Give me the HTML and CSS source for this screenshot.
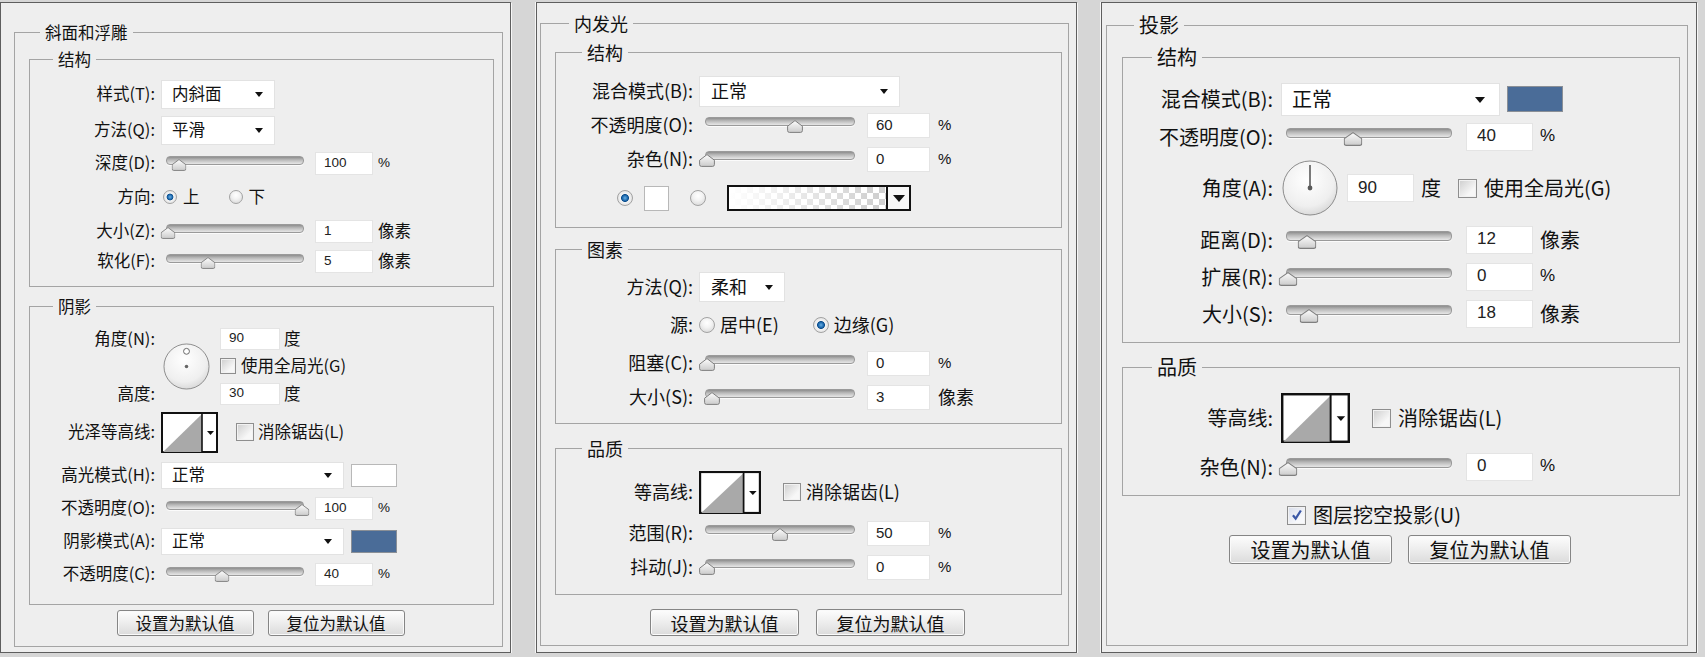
FILE: index.html
```html
<!DOCTYPE html>
<html lang="zh-CN">
<head>
  <meta charset="UTF-8">
  <title>图层样式</title>
  <link rel="stylesheet" href="styles.css">
</head>
<body>
  <svg class="defs" aria-hidden="true">
    <defs>
      <linearGradient id="thumbFill" x1="0" y1="0" x2="0" y2="1">
        <stop offset="0" stop-color="#fdfdfd"/>
        <stop offset="1" stop-color="#cbcbcb"/>
      </linearGradient>
      <radialGradient id="dialFill" cx=".45" cy=".35" r=".7">
        <stop offset="0" stop-color="#ffffff"/>
        <stop offset=".7" stop-color="#efefef"/>
        <stop offset="1" stop-color="#d4d4d4"/>
      </radialGradient>
      <symbol id="thumb" viewBox="0 0 16 13" preserveAspectRatio="none">
        <path d="M8 .6 15.4 6.2V10.6Q15.4 12.4 13.6 12.4H2.4Q.6 12.4 .6 10.6V6.2Z" fill="url(#thumbFill)" stroke="#7f7f7f" stroke-width="1"/>
      </symbol>
      <symbol id="contour" viewBox="0 0 57 41" preserveAspectRatio="none">
        <rect x="1" y="1" width="55" height="39" fill="#fff" stroke="#111" stroke-width="2"/>
        <path d="M2 40 41 2V40Z" fill="#a9a9a9"/>
        <path d="M41 1V40" stroke="#111" stroke-width="1.6"/>
        <path d="M46 19h7l-3.5 4z" fill="#111"/>
      </symbol>
      <symbol id="tick" viewBox="0 0 12 12">
        <path d="M2.6 6.4 5 9.4 9.6 2.2" fill="none" stroke="#3b58a6" stroke-width="2"/>
      </symbol>
    </defs>
  </svg>

  <!-- 斜面和浮雕 -->
  <div class="win p1">
    <fieldset class="grp outer">
      <legend>斜面和浮雕</legend>
      <fieldset class="grp sub bevel-struct">
        <legend>结构</legend>
        <div class="row sel"><span class="lbl">样式(T):</span><div class="select">内斜面</div></div>
        <div class="row sel"><span class="lbl">方法(Q):</span><div class="select">平滑</div></div>
        <div class="row">
          <span class="lbl">深度(D):</span>
          <div class="slider"><svg class="thumb" style="--v:.08"><use href="#thumb"/></svg></div>
          <span class="num">100</span><span class="pct">%</span>
        </div>
        <div class="row rad">
          <span class="lbl">方向:</span>
          <span class="radio on"></span><span class="opt">上</span>
          <span class="radio"></span><span class="opt">下</span>
        </div>
        <div class="row">
          <span class="lbl">大小(Z):</span>
          <div class="slider"><svg class="thumb" style="--v:0"><use href="#thumb"/></svg></div>
          <span class="num">1</span><span class="unit">像素</span>
        </div>
        <div class="row">
          <span class="lbl">软化(F):</span>
          <div class="slider"><svg class="thumb" style="--v:.3"><use href="#thumb"/></svg></div>
          <span class="num">5</span><span class="unit">像素</span>
        </div>
      </fieldset>

      <fieldset class="grp sub bevel-shade">
        <legend>阴影</legend>
        <div class="angle">
          <span class="lbl">角度(N):</span>
          <svg class="dial" viewBox="0 0 48 48">
            <circle cx="24" cy="24" r="23" fill="url(#dialFill)" stroke="#8c8c8c"/>
            <circle cx="24" cy="8.5" r="3" fill="#fff" stroke="#666"/>
            <circle cx="24" cy="24" r="1.8" fill="#666"/>
          </svg>
          <div class="aval"><span class="num">90</span><span class="unit">度</span></div>
          <label class="check"><span class="box"></span>使用全局光(G)</label>
          <span class="lbl">高度:</span>
          <div class="aval"><span class="num">30</span><span class="unit">度</span></div>
        </div>
        <div class="row ctr">
          <span class="lbl">光泽等高线:</span>
          <svg class="contour"><use href="#contour"/></svg>
          <label class="check"><span class="box"></span>消除锯齿(L)</label>
        </div>
        <div class="row sel">
          <span class="lbl">高光模式(H):</span>
          <div class="select wide">正常</div>
          <span class="swatch white"></span>
        </div>
        <div class="row">
          <span class="lbl">不透明度(O):</span>
          <div class="slider"><svg class="thumb" style="--v:1"><use href="#thumb"/></svg></div>
          <span class="num">100</span><span class="pct">%</span>
        </div>
        <div class="row sel">
          <span class="lbl">阴影模式(A):</span>
          <div class="select wide">正常</div>
          <span class="swatch blue"></span>
        </div>
        <div class="row">
          <span class="lbl">不透明度(C):</span>
          <div class="slider"><svg class="thumb" style="--v:.4"><use href="#thumb"/></svg></div>
          <span class="num">40</span><span class="pct">%</span>
        </div>
      </fieldset>

      <div class="btns"><button class="btn">设置为默认值</button><button class="btn">复位为默认值</button></div>
    </fieldset>
  </div>

  <!-- 内发光 -->
  <div class="win p2">
    <fieldset class="grp outer">
      <legend>内发光</legend>
      <fieldset class="grp sub glow-struct">
        <legend>结构</legend>
        <div class="row sel"><span class="lbl">混合模式(B):</span><div class="select">正常</div></div>
        <div class="row">
          <span class="lbl">不透明度(O):</span>
          <div class="slider"><svg class="thumb" style="--v:.6"><use href="#thumb"/></svg></div>
          <span class="num">60</span><span class="pct">%</span>
        </div>
        <div class="row">
          <span class="lbl">杂色(N):</span>
          <div class="slider"><svg class="thumb" style="--v:0"><use href="#thumb"/></svg></div>
          <span class="num">0</span><span class="pct">%</span>
        </div>
        <div class="row sw">
          <span class="radio on"></span>
          <span class="swatch white"></span>
          <span class="radio"></span>
          <div class="grad"><span class="grad-fill"></span><span class="grad-arrow"></span></div>
        </div>
      </fieldset>

      <fieldset class="grp sub glow-elem">
        <legend>图素</legend>
        <div class="row sel"><span class="lbl">方法(Q):</span><div class="select short">柔和</div></div>
        <div class="row rad">
          <span class="lbl">源:</span>
          <span class="radio"></span><span class="opt">居中(E)</span>
          <span class="radio on"></span><span class="opt">边缘(G)</span>
        </div>
        <div class="row">
          <span class="lbl">阻塞(C):</span>
          <div class="slider"><svg class="thumb" style="--v:0"><use href="#thumb"/></svg></div>
          <span class="num">0</span><span class="pct">%</span>
        </div>
        <div class="row">
          <span class="lbl">大小(S):</span>
          <div class="slider"><svg class="thumb" style="--v:.035"><use href="#thumb"/></svg></div>
          <span class="num">3</span><span class="unit">像素</span>
        </div>
      </fieldset>

      <fieldset class="grp sub glow-qual">
        <legend>品质</legend>
        <div class="row ctr">
          <span class="lbl">等高线:</span>
          <svg class="contour"><use href="#contour"/></svg>
          <label class="check"><span class="box"></span>消除锯齿(L)</label>
        </div>
        <div class="row">
          <span class="lbl">范围(R):</span>
          <div class="slider"><svg class="thumb" style="--v:.5"><use href="#thumb"/></svg></div>
          <span class="num">50</span><span class="pct">%</span>
        </div>
        <div class="row">
          <span class="lbl">抖动(J):</span>
          <div class="slider"><svg class="thumb" style="--v:0"><use href="#thumb"/></svg></div>
          <span class="num">0</span><span class="pct">%</span>
        </div>
      </fieldset>

      <div class="btns"><button class="btn">设置为默认值</button><button class="btn">复位为默认值</button></div>
    </fieldset>
  </div>

  <!-- 投影 -->
  <div class="win p3">
    <fieldset class="grp outer">
      <legend>投影</legend>
      <fieldset class="grp sub drop-struct">
        <legend>结构</legend>
        <div class="row sel">
          <span class="lbl">混合模式(B):</span>
          <div class="select">正常</div>
          <span class="swatch blue"></span>
        </div>
        <div class="row">
          <span class="lbl">不透明度(O):</span>
          <div class="slider"><svg class="thumb" style="--v:.4"><use href="#thumb"/></svg></div>
          <span class="num">40</span><span class="pct">%</span>
        </div>
        <div class="row dial-row">
          <span class="lbl">角度(A):</span>
          <svg class="dial" viewBox="0 0 56 56">
            <circle cx="28" cy="28" r="27" fill="url(#dialFill)" stroke="#8c8c8c"/>
            <path d="M28 28V5" stroke="#5a5a5a" stroke-width="1.6"/>
            <circle cx="28" cy="28" r="2.4" fill="#5a5a5a"/>
          </svg>
          <span class="num">90</span><span class="unit">度</span>
          <label class="check"><span class="box"></span>使用全局光(G)</label>
        </div>
        <div class="row">
          <span class="lbl">距离(D):</span>
          <div class="slider"><svg class="thumb" style="--v:.12"><use href="#thumb"/></svg></div>
          <span class="num">12</span><span class="unit">像素</span>
        </div>
        <div class="row">
          <span class="lbl">扩展(R):</span>
          <div class="slider"><svg class="thumb" style="--v:0"><use href="#thumb"/></svg></div>
          <span class="num">0</span><span class="pct">%</span>
        </div>
        <div class="row">
          <span class="lbl">大小(S):</span>
          <div class="slider"><svg class="thumb" style="--v:.13"><use href="#thumb"/></svg></div>
          <span class="num">18</span><span class="unit">像素</span>
        </div>
      </fieldset>

      <fieldset class="grp sub drop-qual">
        <legend>品质</legend>
        <div class="row ctr">
          <span class="lbl">等高线:</span>
          <svg class="contour"><use href="#contour"/></svg>
          <label class="check"><span class="box"></span>消除锯齿(L)</label>
        </div>
        <div class="row">
          <span class="lbl">杂色(N):</span>
          <div class="slider"><svg class="thumb" style="--v:0"><use href="#thumb"/></svg></div>
          <span class="num">0</span><span class="pct">%</span>
        </div>
      </fieldset>

      <div class="knock">
        <label class="check"><span class="box on"><svg><use href="#tick"/></svg></span>图层挖空投影(U)</label>
      </div>
      <div class="btns"><button class="btn">设置为默认值</button><button class="btn">复位为默认值</button></div>
    </fieldset>
  </div>
</body>
</html>
```

FILE: styles.css
```css
* {
  box-sizing: border-box;
}

body {
  margin: 0;
  padding-top: 2px;
  display: flex;
  align-items: flex-start;
  background: #d6d6d6;
  font-family: "Noto Sans CJK SC", "Noto Sans", sans-serif;
  color: #111;
  line-height: 1.2;
}

.defs {
  width: 0;
  height: 0;
  flex: none;
}

/* dialog windows */
.win {
  flex: none;
  height: 651px;
  background: #eeeeee;
  border: 1px solid #5e5e5e;
  box-shadow: 1px 1px 0 #f6f6f6, -1px 0 0 #f6f6f6;
}

.p1 {
  width: 511px;
  padding: 19px 0 0 13px;
  font-size: 16.5px;
  --lw: 125px;
  --lg: 6px;
  --sel: 36px;
  --sl: 30px;
}

.p2 {
  width: 541px;
  margin-left: 25px;
  padding: 10px 0 0 3px;
  font-size: 18px;
  --lw: 137px;
  --lg: 6px;
  --sel: 34px;
  --sl: 34px;
}

.p3 {
  width: 596px;
  margin-left: 24px;
  padding: 11px 0 0 4px;
  font-size: 20px;
  --lw: 150px;
  --lg: 8px;
  --sel: 38px;
  --sl: 37px;
}

/* group boxes */
fieldset.grp {
  margin: 0;
  padding: 0;
  min-width: 0;
  border: 1px solid #a4a4a4;
}

.grp legend {
  padding: 0 5px;
  line-height: 20px;
}

.p3 .grp legend {
  line-height: 22px;
}

.p1 .outer { width: 489px; height: 625px; }
.p1 .outer > legend { margin-left: 25px; }
.p1 .sub { width: 465px; margin-left: 14px; }
.p1 .sub > legend { margin-left: 23px; }

.p2 .outer { width: 529px; height: 633px; }
.p2 .outer > legend { margin-left: 28px; }
.p2 .sub { width: 507px; margin-left: 14px; }
.p2 .sub > legend { margin-left: 26px; }

.p3 .outer { width: 582px; height: 632px; }
.p3 .outer > legend { margin-left: 27px; }
.p3 .sub { width: 558px; margin-left: 15px; }
.p3 .sub > legend { margin-left: 29px; }

.bevel-struct { margin-top: 7px !important; padding: 7px 0 10px !important; }
.bevel-shade { margin-top: 9px !important; padding: 9px 0 15px !important; }
.glow-struct { margin-top: 9px !important; padding: 12px 0 7px !important; }
.glow-elem { margin-top: 11px !important; padding: 11px 0 9px !important; }
.glow-qual { margin-top: 14px !important; padding: 10px 0 10px !important; }
.drop-struct { margin-top: 10px !important; padding: 12px 0 10px !important; }
.drop-qual { margin-top: 13px !important; padding: 10px 0 10px !important; }

/* rows */
.row {
  display: flex;
  align-items: center;
  height: var(--sl);
  white-space: nowrap;
}

.row.sel { height: var(--sel); }
.p1 .row.rad { height: 38px; }
.p1 .row.ctr { height: 50px; }
.p2 .row.sw { height: 44px; }
.p2 .row.rad { height: 42px; }
.p2 .row.ctr { height: 48px; }
.p3 .row.dial-row { height: 66px; }
.p3 .row.ctr { height: 60px; }

.lbl {
  flex: none;
  width: var(--lw);
  margin-right: var(--lg);
  text-align: right;
}

/* dropdowns */
.select {
  position: relative;
  flex: none;
  display: flex;
  align-items: center;
  background: #fff;
  border: 1px solid #e2e2e2;
  padding-left: 10px;
}

.select::after {
  content: "";
  position: absolute;
  right: 11px;
  top: 50%;
  margin-top: -2px;
  border: 4.5px solid transparent;
  border-top: 5px solid #111;
  border-bottom: 0;
}

.p1 .select { width: 114px; height: 29px; }
.p1 .select.wide { width: 183px; height: 27px; }
.p2 .select { width: 201px; height: 31px; padding-left: 11px; }
.p2 .select.short { width: 86px; height: 30px; }
.p3 .select { width: 219px; height: 33px; }
.p3 .select::after { border-width: 5.5px; border-top-width: 6px; border-bottom: 0; right: 14px; }

.swatch {
  flex: none;
  margin-left: 7px;
  border: 1px solid #9c9c9c;
}

.swatch.white { background: #fff; border-color: #b8b8b8; }
.swatch.blue { background: #4a6c98; border-color: #8a8f96; }
.p1 .swatch { width: 46px; height: 23px; }
.p3 .swatch { width: 56px; height: 26px; }

/* sliders */
.slider {
  position: relative;
  flex: none;
  height: 15px;
}

.slider::before {
  content: "";
  position: absolute;
  left: 0;
  right: 0;
  top: 0;
  height: 7px;
  border-radius: 4px;
  border: 1px solid #9a9a9a;
  background: linear-gradient(#8e8e8e, #b8b8b8 40%, #d8d8d8 80%, #e6e6e6);
  box-shadow: 0 1px 0 #fbfbfb;
}

.thumb {
  position: absolute;
  top: 3px;
  left: calc(2px + var(--v) * (100% - 4px));
  transform: translateX(-50%);
}

.p1 .slider { width: 138px; margin-left: 5px; }
.p1 .thumb { width: 15px; height: 12px; }
.p2 .slider { width: 150px; margin-left: 6px; height: 16px; }
.p2 .thumb { width: 16px; height: 13px; }
.p3 .slider { width: 166px; margin-left: 5px; height: 18px; }
.p3 .slider::before { height: 8px; border-radius: 4px; }
.p3 .thumb { width: 19px; height: 14px; top: 4px; }

/* number fields */
.num {
  flex: none;
  display: flex;
  align-items: center;
  background: #fff;
  border: 1px solid #e4e4e4;
  padding-left: 8px;
  font-family: "Liberation Sans", sans-serif;
  color: #222;
}

.p1 .num { width: 58px; height: 23px; margin-left: 11px; font-size: 13.5px; }
.p2 .num { width: 63px; height: 25px; margin-left: 12px; font-size: 15px; }
.p3 .num { width: 67px; height: 28px; margin-left: 14px; font-size: 17px; padding-left: 10px; }

.pct {
  font-family: "Liberation Sans", sans-serif;
}

.p1 .pct, .p1 .unit { margin-left: 5px; }
.p1 .pct { font-size: 13.5px; }
.p2 .pct, .p2 .unit { margin-left: 8px; }
.p2 .pct { font-size: 15px; }
.p3 .pct, .p3 .unit { margin-left: 7px; }
.p3 .pct { font-size: 17px; }

/* radios and checkboxes */
.radio {
  flex: none;
  width: 14px;
  height: 14px;
  border-radius: 50%;
  border: 1px solid #a2a2a2;
  background: radial-gradient(circle at 50% 35%, #fff 0, #f3f3f3 40%, #d2d2d2 100%);
}

.radio.on {
  background: radial-gradient(circle at 50% 50%, #6bb0e4 0, #1e6bb0 26%, #0f4f8c 36%, #f4f4f4 44%, #d6d6d6 100%);
}

.p1 .rad .radio { margin: 0 6px 0 2px; }
.p1 .rad .opt { margin-right: 27px; }
.p2 .radio { width: 16px; height: 16px; }
.p2 .rad .radio { margin-right: 5px; }
.p2 .rad .opt { margin-right: 34px; }
.p2 .sw .radio:first-child { margin-left: 61px; }
.p2 .sw .radio { margin-right: 11px; }

.check {
  display: flex;
  align-items: center;
  white-space: nowrap;
}

.box {
  flex: none;
  display: flex;
  align-items: center;
  justify-content: center;
  width: 16px;
  height: 16px;
  margin-right: 5px;
  border: 1px solid #8e8e8e;
  background: linear-gradient(135deg, #cdcdcd, #f7f7f7 70%);
  box-shadow: inset 0 0 0 1px #f2f2f2;
}

.box.on {
  background: linear-gradient(135deg, #d6dcea, #f7f8fb 70%);
}

.box svg {
  width: 80%;
  height: 80%;
}

.p1 .ctr .check { margin-left: 18px; }
.p1 .ctr .box { width: 18px; height: 18px; margin-right: 4px; }
.p2 .check { margin-left: 22px; }
.p2 .box { width: 18px; height: 18px; }
.p3 .box { width: 19px; height: 19px; margin-right: 7px; }
.p3 .ctr .check { margin-left: 22px; }
.p3 .dial-row .check { margin-left: 17px; }

/* angle block */
.angle {
  display: grid;
  grid-template-columns: 131px 59px 1fr;
  grid-template-rows: 27px 28px 27px;
  align-items: center;
}

.angle .lbl {
  width: auto;
  margin-right: 0;
  padding-right: 6px;
}

.angle .dial {
  grid-column: 2;
  grid-row: 1 / 4;
  width: 47px;
  height: 47px;
  margin-left: 2px;
}

.angle .lbl:last-of-type { grid-row: 3; grid-column: 1; }
.angle .aval { display: flex; align-items: center; }
.angle .aval .num { margin-left: 0; width: 60px; height: 22px; }
.angle .aval .unit { margin-left: 4px; }
.angle .check { grid-column: 3; grid-row: 2; }
.angle .aval:last-child { grid-column: 3; grid-row: 3; }

.p3 .dial { flex: none; width: 56px; height: 56px; margin-left: 1px; }
.p3 .dial-row .num { margin-left: 9px; }

/* contour pickers */
.contour { flex: none; }
.p1 .contour { width: 57px; height: 41px; }
.p2 .contour { width: 62px; height: 43px; }
.p3 .contour { width: 69px; height: 50px; }

/* gradient picker */
.grad {
  flex: none;
  display: flex;
  width: 184px;
  height: 26px;
  margin-left: 10px;
  border: 2px solid #111;
}

.grad-fill {
  flex: 1;
  background:
    linear-gradient(to right, #fff 0%, rgba(255, 255, 255, 0) 95%),
    repeating-conic-gradient(#d0d0d0 0 25%, #fff 0 50%) 0 0 / 12px 12px;
}

.grad-arrow {
  position: relative;
  width: 23px;
  border-left: 2px solid #111;
  background: #f6f6f6;
}

.grad-arrow::after {
  content: "";
  position: absolute;
  left: 50%;
  top: 50%;
  margin: -3px 0 0 -6px;
  border: 6px solid transparent;
  border-top: 7px solid #111;
  border-bottom: 0;
}

.p2 .swatch { width: 25px; height: 25px; margin: 0 21px 0 0; }

/* bottom area */
.knock {
  display: flex;
  align-items: center;
  height: 38px;
  padding-left: 180px;
}

.btns {
  display: flex;
  justify-content: center;
}

.btn {
  font: inherit;
  color: inherit;
  padding: 0;
  line-height: 1;
  border: 1px solid #858585;
  border-radius: 3px;
  background: linear-gradient(#fdfdfd, #ededed 50%, #dbdbdb);
  box-shadow: inset 0 0 0 1px #fafafa;
}

.p1 .btns { margin-top: 5px; gap: 14px; padding-left: 4px; }
.p1 .btn { width: 137px; height: 26px; }
.p2 .btns { margin-top: 14px; gap: 17px; padding-left: 6px; }
.p2 .btn { width: 149px; height: 27px; }
.p3 .btns { margin-top: 1px; gap: 16px; padding-left: 6px; }
.p3 .btn { width: 163px; height: 29px; }
```
